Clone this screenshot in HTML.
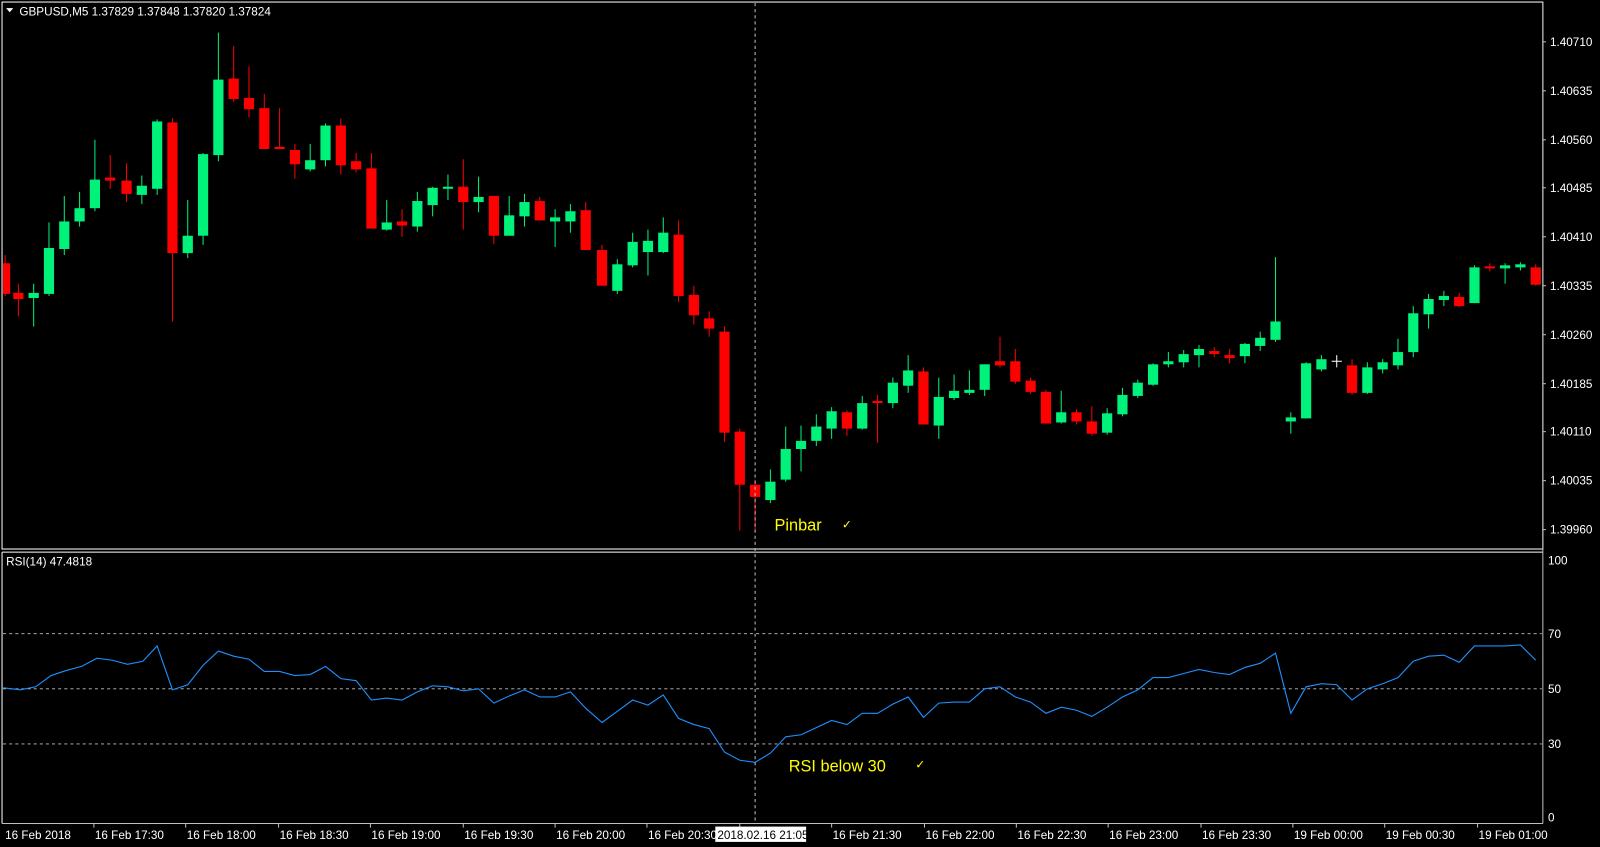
<!DOCTYPE html>
<html><head><meta charset="utf-8"><style>
html,body{margin:0;padding:0;background:#000;width:1600px;height:847px;overflow:hidden}
svg{display:block}
text{font-family:"Liberation Sans",sans-serif;fill:#fff}
</style></head><body>
<svg id="s" width="1600" height="847" viewBox="0 0 1568 830" preserveAspectRatio="none" xmlns="http://www.w3.org/2000/svg">
<rect x="0" y="0" width="1568" height="830" fill="#000"/>
<g id="c"></g>
<!-- frames -->
<rect x="2" y="2" width="1510" height="536" fill="none" stroke="#fff" stroke-width="1"/>
<line x1="2" y1="541" x2="1512" y2="541" stroke="#fff"/>
<line x1="2" y1="541" x2="2" y2="807" stroke="#fff"/>
<line x1="1512" y1="2" x2="1512" y2="807" stroke="#c0c0c0"/>
<line x1="2" y1="807" x2="1512" y2="807" stroke="#c0c0c0"/>
<!-- rsi levels -->
<g stroke="#c0c0c0" stroke-dasharray="3,3" stroke-width="0.9">
<line x1="3" y1="621" x2="1511" y2="621"/>
<line x1="3" y1="675" x2="1511" y2="675"/>
<line x1="3" y1="729" x2="1511" y2="729"/>
</g>
<polyline fill="none" stroke="#1e90ff" stroke-width="1.1" points="3,674 20,676 35,673 50,662 65,657 80,653 95,645 110,647 125,651 140,648 154,633 169,676 184,671 199,652 214,638 229,643 244,646 259,658 274,658 289,662 304,661 319,653 334,665 349,667 364,686 379,684 394,686 409,678 424,672 439,673 454,677 469,675 484,689 499,682 514,676 529,683 544,683 559,678 574,694 590,708 605,697 620,686 635,691 650,681 665,704 680,710 695,714 710,737 725,745 740,747 755,738 770,722 785,720 800,713 815,706 830,710 845,699 860,699 875,690 890,683 905,703 920,689 935,688 950,688 965,675 980,673 995,683 1010,688 1025,699 1040,693 1055,696 1070,702 1085,693 1100,683 1115,676 1130,664 1145,664 1160,660 1175,656 1190,659 1205,661 1220,654 1235,650 1250,640 1265,699 1280,673 1295,670 1310,671 1325,686 1340,675 1355,670 1370,664 1385,648 1400,643 1415,642 1430,649 1445,633 1460,633 1475,633 1490,632 1505,647"/>
<!-- crosshair -->
<line x1="740" y1="3" x2="740" y2="807" stroke="#c0c0c0" stroke-dasharray="3,3"/>
<!-- header -->
<path d="M6,8 L13,8 L9.5,12 Z" fill="#fff"/>
<text x="19" y="15" font-size="11.5">GBPUSD,M5  1.37829 1.37848 1.37820 1.37824</text>
<text x="6" y="554" font-size="11.5">RSI(14) 47.4818</text>
<!-- annotations -->
<text x="759" y="520" font-size="16" style="fill:#ffff00">Pinbar</text>
<text x="825" y="518" font-size="12" style="fill:#ffff00">✓</text>
<text x="773" y="756" font-size="16" style="fill:#ffff00">RSI below 30</text>
<text x="897" y="753" font-size="12" style="fill:#ffff00">✓</text>
<!-- price axis -->
<g font-size="11.5">
<g stroke="#c0c0c0"><line x1="1512" y1="41" x2="1515" y2="41"/><line x1="1512" y1="89" x2="1515" y2="89"/><line x1="1512" y1="137" x2="1515" y2="137"/><line x1="1512" y1="184" x2="1515" y2="184"/><line x1="1512" y1="232" x2="1515" y2="232"/><line x1="1512" y1="280" x2="1515" y2="280"/><line x1="1512" y1="328" x2="1515" y2="328"/><line x1="1512" y1="376" x2="1515" y2="376"/><line x1="1512" y1="423" x2="1515" y2="423"/><line x1="1512" y1="471" x2="1515" y2="471"/><line x1="1512" y1="519" x2="1515" y2="519"/></g>
<text x="1519" y="45">1.40710</text><text x="1519" y="93">1.40635</text><text x="1519" y="141">1.40560</text><text x="1519" y="188">1.40485</text><text x="1519" y="236">1.40410</text><text x="1519" y="284">1.40335</text><text x="1519" y="332">1.40260</text><text x="1519" y="380">1.40185</text><text x="1519" y="427">1.40110</text><text x="1519" y="475">1.40035</text><text x="1519" y="523">1.39960</text>
<text x="1517" y="553">100</text><text x="1517" y="625">70</text><text x="1517" y="679">50</text><text x="1517" y="733">30</text><text x="1517" y="805">0</text>
</g>
<!-- time axis -->
<g font-size="11.5">
<g stroke="#c0c0c0"><line x1="92" y1="807" x2="92" y2="811"/><line x1="182" y1="807" x2="182" y2="811"/><line x1="273" y1="807" x2="273" y2="811"/><line x1="363" y1="807" x2="363" y2="811"/><line x1="454" y1="807" x2="454" y2="811"/><line x1="544" y1="807" x2="544" y2="811"/><line x1="634" y1="807" x2="634" y2="811"/><line x1="725" y1="807" x2="725" y2="811"/><line x1="815" y1="807" x2="815" y2="811"/><line x1="906" y1="807" x2="906" y2="811"/><line x1="996" y1="807" x2="996" y2="811"/><line x1="1086" y1="807" x2="1086" y2="811"/><line x1="1177" y1="807" x2="1177" y2="811"/><line x1="1267" y1="807" x2="1267" y2="811"/><line x1="1357" y1="807" x2="1357" y2="811"/><line x1="1448" y1="807" x2="1448" y2="811"/></g>
<text x="5" y="822">16 Feb 2018</text><text x="93" y="822">16 Feb 17:30</text><text x="183" y="822">16 Feb 18:00</text><text x="274" y="822">16 Feb 18:30</text><text x="364" y="822">16 Feb 19:00</text><text x="455" y="822">16 Feb 19:30</text><text x="545" y="822">16 Feb 20:00</text><text x="635" y="822">16 Feb 20:30</text><text x="816" y="822">16 Feb 21:30</text><text x="907" y="822">16 Feb 22:00</text><text x="997" y="822">16 Feb 22:30</text><text x="1087" y="822">16 Feb 23:00</text><text x="1178" y="822">16 Feb 23:30</text><text x="1268" y="822">19 Feb 00:00</text><text x="1358" y="822">19 Feb 00:30</text><text x="1449" y="822">19 Feb 01:00</text>
<rect x="701" y="810" width="89" height="15" fill="#fff"/>
<text x="703" y="822" style="fill:#000">2018.02.16 21:05</text>
</g>
</svg>
<script>
var d=[[5,'r',258,288,250,290],[18,'r',287,293,278,310],[33,'g',287,292,278,320],[48,'g',243,288,218,290],[63,'g',217,244,192,250],[78,'g',204,217,188,222],[93,'g',176,204,137,207],[108,'r',174,177,152,185],[124,'r',177,190,160,198],[139,'g',182,191,172,200],[154,'g',119,185,117,191],[169,'r',120,248,116,315],[184,'g',231,248,196,253],[199,'g',151,231,150,240],[214,'g',78,152,32,158],[229,'r',77,97,45,100],[244,'r',96,107,65,115],[259,'r',106,146,92,146],[274,'r',144,146,106,146],[289,'r',147,161,141,175],[304,'g',157,166,141,168],[319,'g',123,157,121,163],[334,'r',123,162,116,171],[349,'r',158,166,150,169],[364,'r',165,224,150,224],[379,'g',218,225,196,226],[394,'r',217,221,205,232],[409,'g',197,222,188,227],[424,'g',184,201,183,212],[439,'g',183,185,171,196],[454,'r',183,198,156,225],[469,'g',193,198,173,208],[484,'r',192,231,192,239],[499,'g',211,231,192,231],[514,'g',198,212,190,222],[529,'r',197,216,193,216],[544,'g',213,217,205,242],[559,'g',207,217,200,228],[574,'r',206,245,198,245],[590,'r',245,280,240,280],[605,'g',259,285,254,288],[620,'g',237,260,228,262],[635,'g',236,247,225,270],[650,'g',228,247,213,248],[665,'r',230,290,216,296],[680,'r',289,309,280,318],[695,'r',312,322,305,330],[710,'r',325,424,320,433],[725,'r',423,475,420,520],[740,'r',475,487,470,520],[755,'g',472,490,460,493],[770,'g',440,470,418,472],[785,'g',432,440,417,462],[800,'g',418,432,406,437],[815,'g',403,420,399,430],[830,'r',404,420,402,427],[845,'g',395,420,388,421],[860,'r',393,395,387,434],[875,'g',375,395,370,400],[890,'g',363,378,348,385],[905,'r',364,416,360,416],[920,'g',389,417,370,430],[935,'g',383,390,367,392],[950,'g',382,385,363,387],[965,'g',357,382,357,388],[980,'r',354,358,330,360],[995,'r',354,374,342,376],[1010,'r',373,384,370,386],[1025,'r',384,415,382,415],[1040,'g',404,414,383,415],[1055,'r',404,413,401,416],[1070,'r',413,425,398,427],[1085,'g',405,424,400,426],[1100,'g',387,406,380,408],[1115,'g',375,388,372,390],[1130,'g',357,377,356,378],[1145,'g',354,357,345,360],[1160,'g',347,355,343,360],[1175,'g',342,348,338,360],[1190,'r',344,347,340,350],[1205,'r',348,351,342,356],[1220,'g',337,349,336,356],[1235,'g',331,339,325,344],[1250,'g',315,333,252,335],[1265,'g',409,413,404,425],[1280,'g',356,410,355,410],[1295,'g',352,362,348,364],[1310,'w',354,355,348,360],[1325,'r',358,385,352,387],[1340,'g',360,385,355,386],[1355,'g',355,362,352,366],[1370,'g',345,358,332,362],[1385,'g',307,345,300,350],[1400,'g',293,308,288,322],[1415,'g',290,294,285,300],[1430,'r',291,300,287,301],[1445,'g',262,297,260,297],[1460,'r',261,263,258,266],[1475,'g',260,263,258,278],[1490,'g',259,262,257,265],[1505,'r',262,279,259,280]];
var col={r:'#ff0000',g:'#00f27a',w:'#ffffff'};
var h='';
d.forEach(function(c){var x=c[0],k=col[c[1]];var x0=Math.max(3,x-5),x1=Math.min(1511,x+5);
h+='<line x1="'+x+'" y1="'+c[4]+'" x2="'+x+'" y2="'+c[5]+'" stroke="'+k+'" stroke-width="1"/>';
if(c[1]=='w'){h+='<line x1="'+(x-5)+'" y1="'+c[2]+'" x2="'+(x+5)+'" y2="'+c[2]+'" stroke="#fff"/>';}
else h+='<rect x="'+x0+'" y="'+c[2]+'" width="'+(x1-x0)+'" height="'+Math.max(2,c[3]-c[2])+'" fill="'+k+'"/>';});
document.getElementById('c').innerHTML=h;
</script>
</body></html>
